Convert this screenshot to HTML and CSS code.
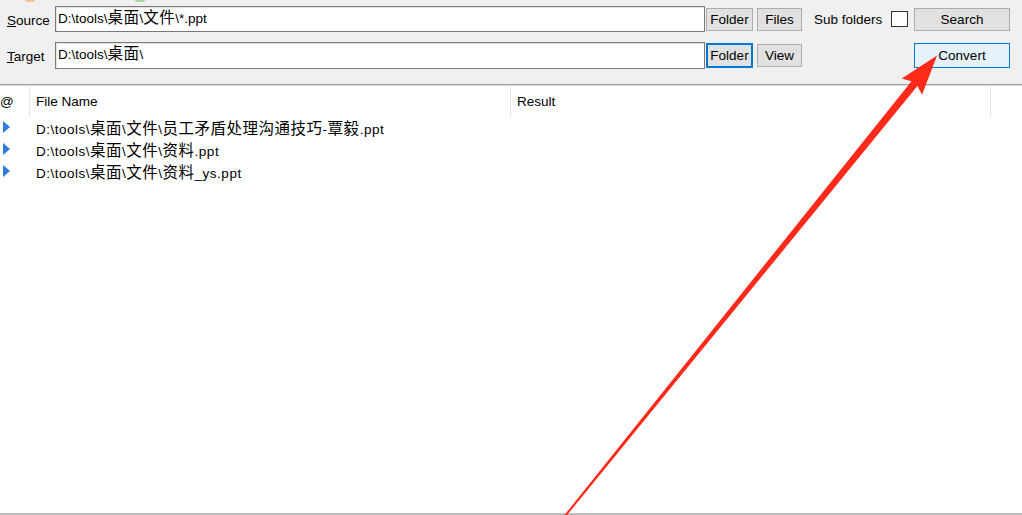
FILE: index.html
```html
<!DOCTYPE html>
<html>
<head>
<meta charset="utf-8">
<link rel="stylesheet" href="styles.css">
</head>
<body>
<div class="app">
  <div class="toolbar">
    <div class="peek"><span class="blip orange"></span><span class="blip green"></span></div>
    <div class="grid">
      <label class="lbl"><u>S</u>ource</label>
      <div class="edit">D:\tools\<span class="cjk">桌面</span>\<span class="cjk">文件</span>\*.ppt</div>
      <button class="btn">Folder</button>
      <button class="btn narrow">Files</button>
      <div class="sub"><span>Sub folders</span><span class="check"></span></div>
      <button class="btn wide">Search</button>

      <label class="lbl"><u>T</u>arget</label>
      <div class="edit tall">D:\tools\<span class="cjk">桌面</span>\</div>
      <button class="btn focused">Folder</button>
      <button class="btn narrow">View</button>
      <div class="sub"></div>
      <button class="btn wide default">Convert</button>
    </div>
  </div>
  <div class="list">
    <div class="head">
      <div class="col c0">@</div>
      <div class="col c1">File Name</div>
      <div class="col c2">Result</div>
      <div class="col c3"></div>
    </div>
    <div class="row"><span class="tri"></span><span class="name">D:\tools\<span class="cjk">桌面</span>\<span class="cjk">文件</span>\<span class="cjk">员工矛盾处理沟通技巧</span>-<span class="cjk">覃毅</span>.ppt</span></div>
    <div class="row"><span class="tri"></span><span class="name">D:\tools\<span class="cjk">桌面</span>\<span class="cjk">文件</span>\<span class="cjk">资料</span>.ppt</span></div>
    <div class="row"><span class="tri"></span><span class="name">D:\tools\<span class="cjk">桌面</span>\<span class="cjk">文件</span>\<span class="cjk">资料</span>_ys.ppt</span></div>
  </div>
  <div class="status"></div>
  <svg class="arrow" width="1022" height="515" viewBox="0 0 1022 515">
    <g transform="translate(565,516) rotate(-51.06)">
      <polygon fill="#ff2a1a" points="0,-1 556,-3.8 552,-13 592,0 552,13 556,3.8 0,1"/>
    </g>
  </svg>
</div>
</body>
</html>
```
FILE: styles.css
```css
* { box-sizing: border-box; }
html, body { margin: 0; padding: 0; }
body {
  width: 1022px;
  height: 515px;
  overflow: hidden;
  background: #ffffff;
  font-family: "Liberation Sans", "Noto Sans CJK SC", sans-serif;
  font-size: 13.5px;
  color: #000;
}
.cjk {
  font-family: "Noto Sans CJK SC", sans-serif;
  font-size: 15.5px;
  line-height: 1;
  letter-spacing: 0.5px;
}
.app {
  position: relative;
  height: 515px;
  display: flex;
  flex-direction: column;
}
.toolbar {
  background: #f0f0f0;
  height: 84px;
  flex: none;
}
.peek {
  height: 2px;
  display: flex;
}
.blip {
  height: 2px;
  width: 10px;
  border-radius: 0 0 5px 5px;
}
.blip.orange { background: #f5c59a; margin-left: 25px; }
.blip.green { background: #a9d9a0; margin-left: 100px; }
.grid {
  display: grid;
  grid-template-columns: 48px 651px 47px 49px 112px 96px;
  grid-template-rows: 26px 27px;
  row-gap: 10px;
  padding: 4px 0 0 7px;
  align-items: center;
}
.lbl {
  color: #000;
  padding-top: 2px;
}
.edit {
  width: 650px;
  height: 26px;
  background: #fff;
  border: 1px solid #7a7a7a;
  box-shadow: inset 1px 1px 0 #e3e3e3;
  padding: 2px 0 0 2px;
  line-height: 20px;
  white-space: nowrap;
}
.edit.tall { height: 27px; }
.btn {
  font: inherit;
  color: #000;
  height: 23px;
  width: 47px;
  background: #e1e1e1;
  border: 1px solid #adadad;
  padding: 0;
  margin: 0;
  line-height: 21px;
  text-align: center;
}
.btn.narrow { width: 45px; margin-left: 4px; }
.btn.wide { width: 96px; }
.btn.focused {
  height: 25px;
  border: 2px solid #0078d7;
  line-height: 21px;
}
.btn.default {
  height: 25px;
  background: #e5f1fb;
  border: 1px solid #0078d7;
}
.sub {
  display: flex;
  align-items: center;
  padding-left: 12px;
  padding-right: 6px;
}
.check {
  width: 17px;
  height: 16px;
  background: #fff;
  border: 1px solid #333;
  margin-left: auto;
}
.list {
  flex: 1;
  border-top: 1px solid #a0a0a0;
  box-shadow: inset 0 1px 0 #d8d8d8;
  padding-top: 2px;
  background: #fff;
}
.head {
  display: flex;
  height: 30px;
}
.col {
  height: 30px;
  line-height: 30px;
  border-right: 1px solid #e5e5e5;
  padding-left: 6px;
  color: #000;
}
.c0 { width: 30px; padding-left: 0; }
.c1 { width: 481px; }
.c2 { width: 480px; }
.c3 { flex: 1; border-right: none; }
.row {
  display: flex;
  align-items: center;
  height: 22px;
}
.tri {
  width: 0;
  height: 0;
  margin-left: 3px;
  margin-top: -2px;
  border-top: 6px solid transparent;
  border-bottom: 6px solid transparent;
  border-left: 7px solid #2f7be0;
}
.name {
  margin-left: 26px;
  white-space: nowrap;
  letter-spacing: 0.5px;
}
.status {
  height: 2px;
  flex: none;
  background: #bdbdbd;
}
.arrow {
  position: absolute;
  left: 0;
  top: 0;
  pointer-events: none;
}
```
